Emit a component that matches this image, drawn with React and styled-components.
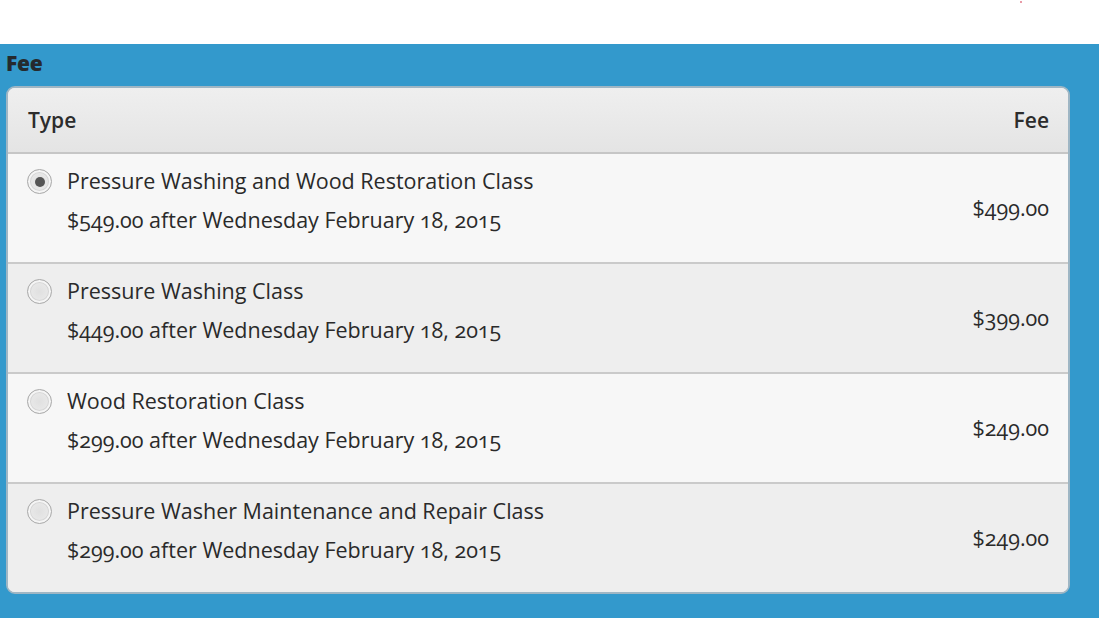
import styled, { createGlobalStyle } from "styled-components"

const GlobalStyle = createGlobalStyle`
    html, body {
        margin: 0;
        padding: 0;
        background: #ffffff;
        font-family: "Open Sans", "Noto Sans", sans-serif;
    }
`

const fees = [
    { name: "Pressure Washing and Wood Restoration Class", late: "$549.00", price: "$499.00", checked: true },
    { name: "Pressure Washing Class", late: "$449.00", price: "$399.00" },
    { name: "Wood Restoration Class", late: "$299.00", price: "$249.00" },
    { name: "Pressure Washer Maintenance and Repair Class", late: "$299.00", price: "$249.00" },
]

export default function App() {
    return (
        <>
            <GlobalStyle />
            <TopBar>
                <Speck />
            </TopBar>
            <Section>
                <Heading>Fee</Heading>
                <Panel>
                    <HeaderRow>
                        <span>Type</span>
                        <span>Fee</span>
                    </HeaderRow>
                    {fees.map((fee, i) => (
                        <Row key={fee.name} $alt={i % 2 === 1} $last={i === fees.length - 1}>
                            <Radio $checked={fee.checked} />
                            <Info>
                                <Title>{fee.name}</Title>
                                <Sub>{fee.late} after Wednesday February 18, 2015</Sub>
                            </Info>
                            <Price>{fee.price}</Price>
                        </Row>
                    ))}
                </Panel>
            </Section>
        </>
    )
}

const TopBar = styled.div`
    height: 44px;
    background: #ffffff;
    display: flex;
    justify-content: flex-end;
    padding-right: 77px;
`

const Speck = styled.div`
    width: 2px;
    height: 2px;
    margin-top: 1px;
    background: #e07a8a;
    border-radius: 1px;
`

const Section = styled.div`
    background: #3399cc;
    height: 574px;
    padding: 6px 29px 0 6px;
    box-sizing: border-box;
`

const Heading = styled.div`
    font-family: "Open Sans", sans-serif;
    font-weight: 800;
    font-size: 21px;
    line-height: 26px;
    color: #252a2e;
    letter-spacing: -0.3px;
    height: 36px;
`

const Panel = styled.div`
    border: 2px solid #9fb6c4;
    border-radius: 9px;
    overflow: hidden;
    background: #f7f7f7;
`

const HeaderRow = styled.div`
    height: 64px;
    display: flex;
    align-items: center;
    justify-content: space-between;
    padding: 0 19px 0 20px;
    background: linear-gradient(#efefef, #e4e4e4);
    border-bottom: 2px solid #c6c6c6;
    font-weight: 600;
    font-size: 21px;
    color: #2c2c2c;
`

const Row = styled.div`
    display: flex;
    align-items: flex-start;
    padding: 13px 19px 0 19px;
    box-sizing: border-box;
    background: ${p => (p.$alt ? "#eeeeee" : "#f7f7f7")};
    border-bottom: ${p => (p.$last ? "none" : "2px solid #cacaca")};
    height: ${p => (p.$last ? "108px" : "110px")};
`

const Radio = styled.span`
    width: 25px;
    height: 25px;
    margin-top: 2px;
    border-radius: 50%;
    box-sizing: border-box;
    border: 1px solid #a9a9a9;
    background: radial-gradient(circle, #e0e0e0 0, #eaeaea 70%, #f4f4f4 100%);
    box-shadow: inset 0 0 0 2px #f5f5f5, inset 0 0 0 3px #d6d6d6;
    position: relative;
    flex-shrink: 0;

    &::after {
        content: "";
        display: ${p => (p.$checked ? "block" : "none")};
        position: absolute;
        left: 6.5px;
        top: 6.5px;
        width: 10px;
        height: 10px;
        border-radius: 50%;
        background: #555555;
    }
`

const Info = styled.div`
    flex: 1;
    padding-left: 15px;
    color: #2a2a2a;
    font-size: 21.5px;
    font-variant-numeric: oldstyle-nums;
`

const Title = styled.div`
    line-height: 28px;
    height: 39px;
`

const Sub = styled.div`
    line-height: 28px;
`

const Price = styled.div`
    align-self: center;
    margin-top: -14px;
    font-size: 21.5px;
    color: #2a2a2a;
    font-variant-numeric: oldstyle-nums;
`
